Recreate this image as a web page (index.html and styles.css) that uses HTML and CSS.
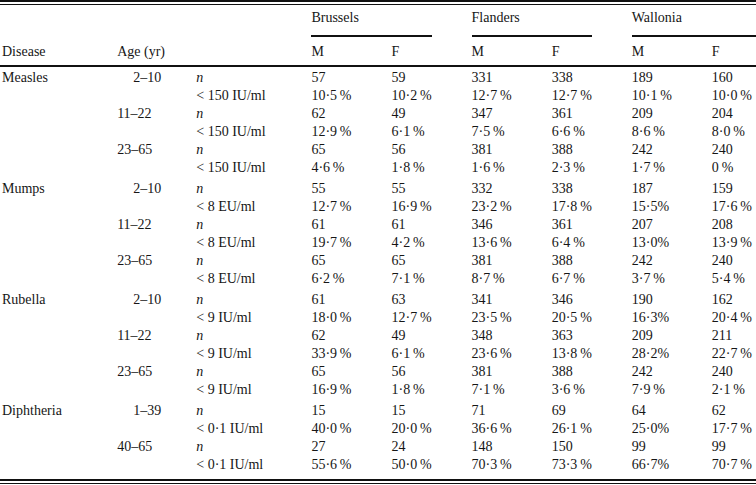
FILE: index.html
```html
<!DOCTYPE html>
<html lang="en">
<head>
<meta charset="utf-8">
<title>Seroprevalence table</title>
<link rel="stylesheet" href="styles.css">
</head>
<body>
<div class="frame">
<table class="data">
  <colgroup>
    <col class="w-disease"><col class="w-age"><col class="w-crit">
    <col class="w-num"><col class="w-num"><col class="w-num"><col class="w-num"><col class="w-num"><col class="w-last">
  </colgroup>
  <thead>
    <tr class="groups">
      <th></th><th></th><th></th>
      <th colspan="2" class="grp"><div class="grp-label">Brussels</div></th>
      <th colspan="2" class="grp"><div class="grp-label">Flanders</div></th>
      <th colspan="2" class="grp"><div class="grp-label grp-end">Wallonia</div></th>
    </tr>
    <tr class="sub">
      <th>Disease</th><th>Age (yr)</th><th></th>
      <th>M</th><th>F</th><th>M</th><th>F</th><th>M</th><th>F</th>
    </tr>
  </thead>
  <tbody>
    <tr class="first"><td>Measles</td><td class="age pad">2–10</td><td><i>n</i></td><td>57</td><td>59</td><td>331</td><td>338</td><td>189</td><td>160</td></tr>
    <tr><td></td><td></td><td>&lt; 150 IU/ml</td><td>10·5&#8201;%</td><td>10·2&#8201;%</td><td>12·7&#8201;%</td><td>12·7&#8201;%</td><td>10·1&#8201;%</td><td>10·0&#8201;%</td></tr>
    <tr><td></td><td class="age">11–22</td><td><i>n</i></td><td>62</td><td>49</td><td>347</td><td>361</td><td>209</td><td>204</td></tr>
    <tr><td></td><td></td><td>&lt; 150 IU/ml</td><td>12·9&#8201;%</td><td>6·1&#8201;%</td><td>7·5&#8201;%</td><td>6·6&#8201;%</td><td>8·6&#8201;%</td><td>8·0&#8201;%</td></tr>
    <tr><td></td><td class="age">23–65</td><td><i>n</i></td><td>65</td><td>56</td><td>381</td><td>388</td><td>242</td><td>240</td></tr>
    <tr><td></td><td></td><td>&lt; 150 IU/ml</td><td>4·6&#8201;%</td><td>1·8&#8201;%</td><td>1·6&#8201;%</td><td>2·3&#8201;%</td><td>1·7&#8201;%</td><td>0&#8201;%</td></tr>
  </tbody>
  <tbody>
    <tr class="first"><td>Mumps</td><td class="age pad">2–10</td><td><i>n</i></td><td>55</td><td>55</td><td>332</td><td>338</td><td>187</td><td>159</td></tr>
    <tr><td></td><td></td><td>&lt; 8 EU/ml</td><td>12·7&#8201;%</td><td>16·9&#8201;%</td><td>23·2&#8201;%</td><td>17·8&#8201;%</td><td>15·5%</td><td>17·6&#8201;%</td></tr>
    <tr><td></td><td class="age">11–22</td><td><i>n</i></td><td>61</td><td>61</td><td>346</td><td>361</td><td>207</td><td>208</td></tr>
    <tr><td></td><td></td><td>&lt; 8 EU/ml</td><td>19·7&#8201;%</td><td>4·2&#8201;%</td><td>13·6&#8201;%</td><td>6·4&#8201;%</td><td>13·0%</td><td>13·9&#8201;%</td></tr>
    <tr><td></td><td class="age">23–65</td><td><i>n</i></td><td>65</td><td>65</td><td>381</td><td>388</td><td>242</td><td>240</td></tr>
    <tr><td></td><td></td><td>&lt; 8 EU/ml</td><td>6·2&#8201;%</td><td>7·1&#8201;%</td><td>8·7&#8201;%</td><td>6·7&#8201;%</td><td>3·7&#8201;%</td><td>5·4&#8201;%</td></tr>
  </tbody>
  <tbody>
    <tr class="first"><td>Rubella</td><td class="age pad">2–10</td><td><i>n</i></td><td>61</td><td>63</td><td>341</td><td>346</td><td>190</td><td>162</td></tr>
    <tr><td></td><td></td><td>&lt; 9 IU/ml</td><td>18·0&#8201;%</td><td>12·7&#8201;%</td><td>23·5&#8201;%</td><td>20·5&#8201;%</td><td>16·3%</td><td>20·4&#8201;%</td></tr>
    <tr><td></td><td class="age">11–22</td><td><i>n</i></td><td>62</td><td>49</td><td>348</td><td>363</td><td>209</td><td>211</td></tr>
    <tr><td></td><td></td><td>&lt; 9 IU/ml</td><td>33·9&#8201;%</td><td>6·1&#8201;%</td><td>23·6&#8201;%</td><td>13·8&#8201;%</td><td>28·2%</td><td>22·7&#8201;%</td></tr>
    <tr><td></td><td class="age">23–65</td><td><i>n</i></td><td>65</td><td>56</td><td>381</td><td>388</td><td>242</td><td>240</td></tr>
    <tr><td></td><td></td><td>&lt; 9 IU/ml</td><td>16·9&#8201;%</td><td>1·8&#8201;%</td><td>7·1&#8201;%</td><td>3·6&#8201;%</td><td>7·9&#8201;%</td><td>2·1&#8201;%</td></tr>
  </tbody>
  <tbody>
    <tr class="first"><td>Diphtheria</td><td class="age pad">1–39</td><td><i>n</i></td><td>15</td><td>15</td><td>71</td><td>69</td><td>64</td><td>62</td></tr>
    <tr><td></td><td></td><td>&lt; 0·1 IU/ml</td><td>40·0&#8201;%</td><td>20·0&#8201;%</td><td>36·6&#8201;%</td><td>26·1&#8201;%</td><td>25·0%</td><td>17·7&#8201;%</td></tr>
    <tr><td></td><td class="age">40–65</td><td><i>n</i></td><td>27</td><td>24</td><td>148</td><td>150</td><td>99</td><td>99</td></tr>
    <tr class="last"><td></td><td></td><td>&lt; 0·1 IU/ml</td><td>55·6&#8201;%</td><td>50·0&#8201;%</td><td>70·3&#8201;%</td><td>73·3&#8201;%</td><td>66·7%</td><td>70·7&#8201;%</td></tr>
  </tbody>
</table>
</div>
</body>
</html>
```

FILE: styles.css
```css
html, body {
  margin: 0;
  padding: 0;
  background: #ffffff;
}

.frame {
  width: 756px;
  border-top: 2px solid #111;
  border-bottom: 1px solid #111;
  padding: 2px 0;
}

.data {
  width: 756px;
  border-collapse: collapse;
  table-layout: fixed;
  border-top: 1px solid #111;
  border-bottom: 2px solid #111;
  font-family: "Liberation Serif", "Times New Roman", serif;
  font-size: 14px;
  line-height: 18px;
  color: #161616;
}

.w-disease { width: 115px; }
.w-age { width: 79px; }
.w-crit { width: 115px; }
.w-num { width: 80px; }
.w-last { width: 46px; }

.data th,
.data td {
  padding: 0 0 0 2px;
  text-align: left;
  vertical-align: top;
  font-weight: normal;
  white-space: nowrap;
}

.groups th {
  padding-top: 4px;
}

.grp {
  padding-right: 0;
}

.grp-label {
  padding-bottom: 8px;
  margin-right: 38px;
  border-bottom: 2px solid #111;
}

.grp-label.grp-end {
  margin-right: 0;
}

.sub th {
  padding-top: 6px;
  padding-bottom: 4px;
  border-bottom: 2px solid #111;
}

.data .age.pad {
  padding-left: 18px;
}

.data tbody tr.first td {
  padding-top: 3px;
}

.data tbody:first-of-type tr.first td {
  padding-top: 2px;
}

.data tr.last td {
  padding-bottom: 5px;
}
```
